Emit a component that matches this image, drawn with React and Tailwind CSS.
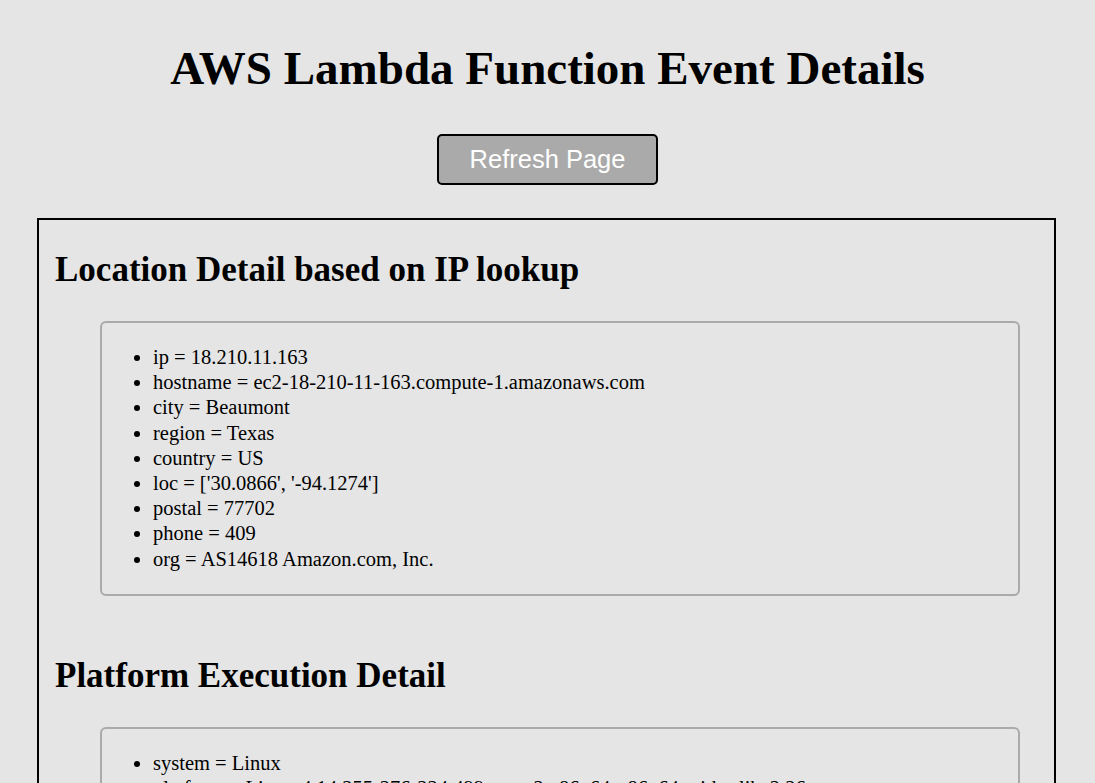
const location = [
  "ip = 18.210.11.163",
  "hostname = ec2-18-210-11-163.compute-1.amazonaws.com",
  "city = Beaumont",
  "region = Texas",
  "country = US",
  "loc = ['30.0866', '-94.1274']",
  "postal = 77702",
  "phone = 409",
  "org = AS14618 Amazon.com, Inc.",
];

const platform = [
  "system = Linux",
  "platform = Linux-4.14.255-276-224.499.amzn2.x86_64-x86_64-with-glibc2.26",
  "release = 4.14.255-276-224.499.amzn2.x86_64",
  "machine = x86_64",
];

const DetailList = ({ items }) => (
  <div className="ml-[45px] mr-[18px] border-2 border-[#aaaaaa] rounded-[6px] px-[11px] py-[22px]">
    <ul className="list-disc pl-[40px] text-[20.5px] leading-[25.2px]">
      {items.map((item) => (
        <li key={item}>{item}</li>
      ))}
    </ul>
  </div>
);

export default function App() {
  return (
    <div className="min-h-screen bg-[#e5e5e5] text-black font-['Liberation_Serif',serif] pt-[40px]">
      {/* Header */}
      <h1 className="text-center font-bold text-[47px] leading-[56px]">
        AWS Lambda Function Event Details
      </h1>

      <div className="flex justify-center mt-[38px]">
        <button className="w-[221px] h-[51px] bg-[#aaaaaa] border-2 border-black rounded-[5px] text-white text-[25.5px] font-['Liberation_Sans',sans-serif]">
          Refresh Page
        </button>
      </div>

      {/* Details box */}
      <div className="ml-[37px] mr-[39px] mt-[33px] border-2 border-black px-[16px] pt-[30px] pb-[40px]">
        <h2 className="font-bold text-[35px] leading-[40px]">
          Location Detail based on IP lookup
        </h2>
        <div className="mt-[31px]">
          <DetailList items={location} />
        </div>

        <h2 className="font-bold text-[35px] leading-[40px] mt-[60px]">
          Platform Execution Detail
        </h2>
        <div className="mt-[31px]">
          <DetailList items={platform} />
        </div>
      </div>
    </div>
  );
}
